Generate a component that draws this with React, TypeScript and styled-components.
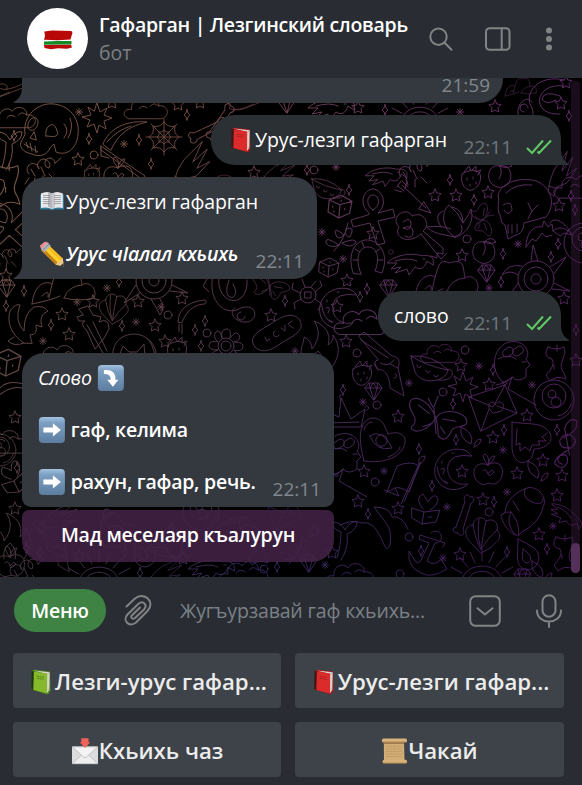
import React from "react";
import styled, { createGlobalStyle, css } from "styled-components";

const GlobalStyle = createGlobalStyle`
  * { box-sizing: border-box; }
  body { margin: 0; background: #292d33; font-family: "Open Sans", "Noto Sans", sans-serif; }
`;

/* ---------- wallpaper ---------- */

const star = "M0-6 L1.8-2 6-1.4 3 1.6 3.7 6 0 4 -3.7 6 -3 1.6 -6-1.4 -1.8-2Z";
const spark = "M0-5.500Q.5-1 3 0Q.5 1 0 5.500Q-.5 1-3 0Q-.5-1 0-5.500Z";
const aster = "M0-3.500V3.500M-3.500 0H3.500M-2.500-2.500 2.500 2.500M2.500-2.500-2.500 2.500";
const ring = "M4 0A4 4 0 1 1-4 0A4 4 0 1 1 4 0Z";

const shapes: Record<string, string> = {
  star,
  spark,
  aster,
  ring,
  skull:
    "M-25 4C-28-14-12-28 4-26C22-24 32-8 27 10C24 20 16 26 6 22L4 14 0 18C-2 24-10 28-18 24C-28 22-32 16-28 10ZM-22-6C-20-14-12-14-12-8S-18 4-22-2ZM-4 6C-6-2 2-10 6-2L8 4C6 8 0 6-4 6ZM-16 2-20 8-14 10ZM-26 14-12 22M-24 12-22 18M-20 13-18 21M-15 16-14 23M14-6Q20 0 14 8M20-12Q24-2 18 8",
  skull2:
    "M-22 8C-26 2-22-4-24-12C-20-26 0-30 14-26C30-20 34-2 24 10L2 16C2 22-2 28-6 28L-14 32-17 18-20 16ZM-19-2Q-10-8-10 3Q-14 10-18 3M-14 18V26M-10 18V26M-5 17V25M6-4 10 4 6 12M10 4 16-2M-16-14Q-6-24 10-22",
  web:
    "M0-18V18M-18 0H18M-13-13 13 13M13-13-13 13M0-15Q4-9 11-11Q9-4 15 0Q9 4 11 11Q4 9 0 15Q-4 9-11 11Q-9 4-15 0Q-9-4-11-11Q-4-9 0-15M0-7Q2-4 5-5Q4-2 7 0Q4 2 5 5Q2 4 0 7Q-2 4-5 5Q-4 2-7 0Q-4-2-5-5Q-2-4 0-7",
  burst: "M0-15 3-6 10-10 7-3 15 0 7 3 9 11 2 7 0 15-3 6-10 9-7 2-15-1-6-3-9-11-3-7Z",
  scythe:
    "M-22-2 22 28 20 32-22 2ZM-20-4C-14-20 4-28 24-26C8-22-4-16-12 2ZM-16-6Q-6-18 8-22M-22 0V8L-14 10",
  bone:
    "M-3 13 6-12C3-18 9-22 11-17C16-18 16-12 12-11L4 15C7 20 1 24-1 19C-6 20-8 14-3 13Z",
  bug: "M-16 2A6 6 0 1 1-6-3A6 6 0 1 1 4-4A5 5 0 1 1 10-9M-16 6-20 12M-10 6-12 14M-2 4-2 12M4 2 10 8M10-9 16-14M-14-3-10 4M-4-5 0 4",
  hand: "M-24 12-14 0-4-8 22-20 4-2 24-10 6 6 22 4 2 14-12 12-20 20ZM-20 6-12 14",
  ankh:
    "M-4-2C-16-12-8-26 0-26S16-12 5-2L20-6 22 2 5 6 12 28 4 30-3 8-20 12-22 5-5 0ZM0-5C-8-10-6-20 0-20S9-10 0-5Z",
  arrow: "M-14-14 10 9M8 3 15 14 3 10ZM-18-13-12-8M-14-18-8-12M-21-9-14-7M-10-20-8-14",
  strawberry:
    "M-9-4C-12 6-4 14 1 12C8 10 12 0 8-6Q0-10-9-4ZM-7-6 -2-12 0-7 5-12 5-6 10-8 7-3M-4 0V2M2-1V1M5 4V6M-1 6V8",
  apple:
    "M0-6C-14-12-18 4-10 11C-4 17 0 10 4 13C14 14 18-2 11-7Q5-10 0-6ZM0-6Q-8-16-3-17Q2-14 0-6Q2-16 7-15Q6-10 0-6M-5 0Q-2-4 0 3Q4-3 6 1Q2 6 0 4",
  key:
    "M4 4C-10 16-24 6-18-3C-28-14-10-24-5-14C8-20 14-4 6 1L26 18 26 24 20 23 20 28 14 26M4 4 24 29 30 23M-14-8Q-6-14-6-6T-14-2Q-4-6-4 2T-12 6",
  lotus:
    "M0 18C-14 10-14-8-6-14Q4-6 8 4Q14-4 16-10C20 4 10 16 0 18ZM0 18C-10 16-24 14-28 8Q-14 6-4 10M-14 8Q-22-4-12-8M6 6Q10 14 0 18M-3-12Q8-10 8 4",
  fly:
    "M0 0C-8-20-24-22-24-12C-24-4-16-2-20 6Q-26 10-18 12Q-8 12 0 0C6-10 26-6 28 2C30 10 14 6 14 12Q8 24 2 16Q2 8 0 0M-2-10 0 14M-3-10-7-18M-2-10 2-20M-6-4-16-12M6 1 18 3M-4 5-12 8M4 8 8 14",
  bat:
    "M-22 14C-22 0-14-8-6-6L-4-12 0-6 4-9 5-2C12-8 20-4 24 2C16-14 4-16 2-10M-22 14-16 6-12 8-6 0-2 4 4 2M24 2 16 0 12 3 5-2",
  peach: "M0-9C-12-12-14 4-8 9Q0 16 8 9C14 2 10-12 0-9ZM0-9Q3-2-1 4M0-9Q8-16 12-9Q6-6 0-9",
  horseshoe:
    "M-15 15C-22-8-10-19 0-18S22-6 14 15L7 13C13-2 8-11 0-11S-14-2-7 16ZM-13-9-8-6M12-9 7-6M-15 2-10 2M15 2 10 2M-6-16-4-11",
  bird:
    "M24-2C20-8 14-4 10-6C0-8-14-6-22 2L-12 2-18 8-8 6-14 12-2 8 0 14 6 6C12 10 16 6 18 0L24 4ZM-14 0Q0-4 8 0M14-2H16",
  sun:
    "M12 0A12 12 0 1 1-12 0A12 12 0 1 1 12 0M18 0A18 18 0 1 1-18 0A18 18 0 1 1 18 0M5 0A5 5 0 1 1-5 0A5 5 0 1 1 5 0M-5-18-3-34 2-18M14-12 30-22 18-5M18 4 34 12 16 10M6 18Q12 26 6 34Q2 26-3 18M-14 12-30 22-18 4M-18-4Q-26-10-34-4Q-28-16-14-13",
  raysun:
    "M20 4C18-16-18-16-20 4M14 4C12-9-12-9-14 4M0-16V-28M7-14 12-25M14-10 23-20M-7-14-12-25M-14-10-23-20M20-4 31-10M-20-4-31-10",
  gem: "M-8-3-4-8H5L9-3 1 9ZM-8-3H9M-4-8-3-3 1 9 4-3 5-8M-3-3 0-8 4-3",
  hat:
    "M-32 16C-30-4-18-8-12-4L-8-16Q-4-22 2-18Q14-22 16-15L18-3C26-8 34 2 30 10M-32 16Q-12 12-4 8M-12-4-15 10M18-3Q4-2 0 10M-22 8Q-14 0-16 9M0 10Q16 14 30 10",
  dice: "M-9-5 1-9 10-4 8 6-1 10-10 5ZM-9-5 0-1 10-4M0-1-1 10M-6 0V1M-5 4V5M4 2V3M1-5V-4",
  branch:
    "M-8 14Q2 4 6-14M4-8Q14-12 8 0Q2 0 4-8M2-2Q-10-12-6-2Q-4 4 2-2M0 6Q14 0 14 6Q8 12 0 6M-3 8Q-18-2-16 6Q-12 12-3 8",
  moon:
    "M10-19C-10-24-24-6-18 9C-12 22 4 24 14 15C0 17-8 8-6-4Q-3-16 18-13Q14-18 10-19M-12-8V-6M-13 0Q-7-3-11 5M-10 12 -6 14M-2-16H0M-17-2Q-16 10-7 15",
  cloud:
    "M-20 14C-28 10-24 2-16 4C-18-6-6-10-2-4C2-12 16-8 14 0C24-2 28 10 18 14ZM-8 3Q-4-2 1 2M5 0Q9-5 14 0",
  gun:
    "M-27-24-22-28 6-4C14-4 14 4 12 8L18 36 4 28C4 16-2 8-8 10Q-14 0-8 0ZM-25-20 2-2M-8 10-12 4M4 4 12 8M8 18A2 2 0 1 0 9 14M-6 3Q2 8 8 0",
  cup:
    "M-19-14Q2-16 18 0C16 12-8 16-15 2Q-18-8-19-14ZM-19-14Q-4-4 18 0M18-1C26 0 24 12 8 10M-13-5A2 2 0 1 0-9-4M-4 0A2 2 0 1 0 0 1M4 5A2 2 0 1 0 8 5",
  cupid:
    "M-24-12 12-24 24 4-12 22ZM-24-12 0-2 12-24M-12 22-4 0M24 4 4-3M0 4C-10-4 0-11 2-4C8-12 14-2 8 2Z",
  ball:
    "M20 0A20 20 0 1 1-20 0A20 20 0 1 1 20 0M12-4A12 12 0 1 1-12-4A12 12 0 1 1 12-4M-2-10A4 4 0 1 1-2-2A4 4 0 1 1-2-10M2-3A5 5 0 1 1 2 7A5 5 0 1 1 2-3M4 16Q14 14 17 4",
  heart:
    "M-20 21C-28-8-22-20-12-22C-2-22 0-16 4-6C16-10 24-4 20 6C16 18-2 24-20 21ZM-14-4Q-2-12 8 8Q-8 12-14-4ZM3 2A5 5 0 1 1-8-1A5 5 0 1 1 3 2M-20-10Q-18-18-12-18M4 17Q14 14 16 7",
  heart2:
    "M-18-21-18 6C-16 20-6 24 2 14L4 6C16 6 24-2 20-10C12-22-2-18-18-21ZM-13-14-14 2-10 0-10 8-5 4 0 8 2 2 10 2 8-2 16-2 12-6 17-10",
  head:
    "M-12 16C-22 4-18-14-6-20C10-26 20-12 14-4L18 2 14 6 14 14Q6 20 0 14L-4 26 24 42M-12 16Q-8 24 0 14M-14-4Q-4-10 4-4M-6-14A4 4 0 1 1-2-8A4 4 0 1 1-6-14M4-15A4 4 0 1 1 8-9A4 4 0 1 1 4-15M10-1H14M-16 22Q-6 20 0 14M-9 19A2 2 0 1 0-5 20",
  clef:
    "M-4 16Q-10 14-6 9Q2 6 0 15Q-4 22-10 16C-12 8 8 4 7-4Q0-14-6-4Q-6 4 2 2M2 8-2-14Q2-24 8-20Q10-12-3-6",
  leaf: "M-8-12Q6-6 2 5Q-10 0-8-12ZM5 8Q6 0 12 0Q12 6 5 8",
  flag:
    "M-18 12-8-14Q6-20 14-14L4 12Q-6 6-10 8ZM-10 8-6 16-21 10M14-16-4 24M16-18-1 22M14-16Q12-24 20-24Q20-18 14-16",
  book: "M-14 2-2 6 14 4 10 16-4 18-14 12ZM-2 6-4 18M-3 3Q-12-8-3-12Q0-8 2-4Q8-14 12-8Q12 0 4 4M2 11H6",
  shell:
    "M-12 10C-22 0-16-8-10-8C-8-18 2-16 3-12C12-16 16-8 14-3C22 6 10 10 9 14L-2 20ZM-10-8Q-8 6-2 16M3-12Q0 2-2 16M14-3Q4 6-2 16M-4-14Q-6 2-3 12",
  glove:
    "M-18 0C-18-14-4-22 2-24C12-30 26-16 20-6C18 6 6 16 0 18L-4 22C-12 24-22 8-22 2Q-18-2-12-1Q-4 8-4 22M-12-1Q-18 10-8 22M2-24Q-2-14 12-10Q20-8 20-14M-10-12-4-2",
  anchor:
    "M4-20A6 6 0 1 1 8-10L0 8Q8 14 14 6L20 16Q4 26-6 20Q-20 14-18-2L-12 8Q-8 12-6 7L2-10-8-14-7-18 18-10 16-6",
  whale:
    "M-42-16Q-30-22-20-18C0-22 2 20 8 4Q10-12 4-18-2-26-8-34 8-34 10-24 20-26 26-12 14-14C26 16 12 30-10 26C-28 22-30 0-26-10M-24 4Q-16 18 0 24",
  pear: "M-10-15Q0-10 6-6C14 0 12 14 0 16C-14 14-10 2-10-15ZM-5-5Q8 4 0 9Q-8 10-5-5",
  crown: "M-22-2-8 4-6-15 4 6 18-4 14 14-20 14ZM-6-18A2 2 0 1 0-5-14M18-6A2 2 0 1 1 20-3M-18 10 12 9",
  core: "M-8-16Q0-12 8-16C12-6 0 0 8 10L10 16Q0 12-6 18L-10 12Q0 2-4-4Q-14-6-8-16ZM1-12V-18M-2 2V6",
  phoenix:
    "M-4 18C-14 12-22 0-18-14Q-12-22-8-20Q-14-4-4 6Q-4-12 6-18Q16-20 20-14Q10-10 14 2L8 0Q10 10 2 10L4 18ZM-4 18Q-14 22-20 16L-14 12",
  dagger:
    "M-12-16-3-19 2-10 10-8 8-3Q18-8 18 4Q14 14 4 24L-4 6Q-12-2-6-4L-12-4-14-8-8-10ZM-4 0 12 28M2-3 16 26",
  cat: "M-22 14C-26-16 20-20 22 14M-16 12-12 2-6 8H2L9 0 10 12M-22 14Q-10 6-8 14M-5 12H0M12-6Q18 0 20 12",
  snake:
    "M-20-24C-26 0-8 18 8 8C26 2 26 24 10 22C0 20-4 12 2 8M-14-24C-18 6 16 10 14-20M8 12A4 4 0 1 0 12 16M-4-20Q-10-4-1-2Q6-6 0-16M-24-24-30-14-24-8",
  flower:
    "M5 0A5 5 0 1 1-5 0A5 5 0 1 1 5 0M8 0A8 8 0 1 1-8 0A8 8 0 1 1 8 0M-4-8Q-6-16 0-17T4-8Q10-16 13-11T8-4Q18-4 17 1T8 4Q14 10 10 14T3 8Q4 18-2 17T-4 8Q-10 16-13 11T-8 4Q-18 4-17-1T-8-4Q-14-10-10-14T-4-8",
  pill: "M-22 14C-30 4-18-2-8-8C4-16 14-22 22-14C30-2 14 4 6 9C-4 16-14 22-22 14ZM-12 4-10 8-7 6M-2-2A3 3 0 1 0 2 2M4-5 8-2 8-8M12-8 16-5M11-9 15-12",
  flame:
    "M-12 24C-22 10-14 2-14-6Q-6-2-6 6C2-4 2-14-4-22C12-16 12-4 10 2Q16-2 15-8C24 4 20 16 14 24M-6 24Q-8 14 0 8Q8 16 5 24",
  spider: "M8 0A8 8 0 1 1-8 0A8 8 0 1 1 8 0M-3-3H3V3H-3ZM-8-2-16-6-15-12M-7 4-14 8-13 14M7-3 14-9 12-14M7 4 14 9 10 15M-3-8-6-16M3-8 8-14",
  chili: "M-12 12C-12-2 0-8 14-10Q18-10 15-6C4-6-4 2-8 12ZM-11 14V22M-8 14-8 24",
  loop: "M-32 12C-36-6-24-18-8-20M30-12C20-4 4 2-6 2Q-18 0-10-6Q2-6-2 2M-32 12C-18 20 0 6 22 0Q32-2 32-12M-26 14Q-12 14 2 6",
  tail: "M-8 18Q-4 4-4-8Q-14-12-12-18Q-4-18 0-10Q6-20 12-18Q12-10 2-6Q4 8-4 20",
};

type Mark = [string, number, number, number?, number?];

const marks: Mark[] = [
  ["loop", 8, 88, 0.7], ["skull", 50, 130], ["burst", 97, 118], ["aster", 79, 112], ["spark", 14, 136], ["spark", 89, 139],
  ["spark", 139, 140], ["spark", 187, 115], ["spark", 151, 164], ["star", 78, 159], ["ring", 94, 155], ["aster", 124, 144],
  ["web", 164, 137], ["scythe", 123, 148], ["bone", 205, 126, 1, 45], ["bug", 45, 172], ["tail", 10, 150], ["cloud", 14, 115, 0.9],
  ["apple", 118, 174], ["hand", 190, 165, 0.9, -20], ["cloud", 146, 106, 0.9], ["star", 112, 102], ["star", 178, 104],
  ["strawberry", 92, 174, 0.8], ["star", 200, 102], ["bone", 216, 120, 1, 15], ["loop", 252, 100, 0.7], ["gem", 286, 104],
  ["bird", 330, 106, 1], ["raysun", 420, 117, 0.9], ["aster", 460, 112], ["star", 358, 107], ["spark", 385, 110],
  ["snake", 540, 100, 1, 90], ["star", 561, 103], ["star", 495, 106], ["spark", 569, 116], ["star", 566, 82], ["hat", 521, 88, 0.5],
  ["cat", 225, 181, 0.6], ["star", 254, 172], ["ring", 314, 170], ["bird", 385, 174, 0.9], ["bug", 417, 175], ["aster", 336, 167],
  ["hand", 278, 172, 0.7], ["spark", 307, 170], ["spark", 349, 190], ["dice", 340, 206, 1.2], ["cup", 327, 190, 0.8],
  ["ankh", 373, 215], ["arrow", 416, 199], ["star", 435, 195], ["star", 456, 195], ["star", 488, 192], ["spark", 450, 180],
  ["spark", 474, 200], ["strawberry", 471, 178], ["peach", 500, 175], ["skull2", 522, 207], ["key", 417, 230], ["lotus", 455, 219],
  ["fly", 483, 220, 0.6, 60], ["bat", 548, 233], ["peach", 484, 251], ["ring", 467, 239], ["ring", 391, 252, 0.6], ["star", 462, 255],
  ["star", 373, 233], ["horseshoe", 368, 258], ["bird", 409, 261], ["sun", 536, 279], ["gem", 486, 273], ["gem", 388, 288],
  ["hat", 447, 281], ["aster", 518, 244], ["aster", 343, 259], ["aster", 489, 288], ["aster", 322, 232], ["spark", 503, 254], ["spark", 558, 244],
  ["spark", 551, 257], ["spark", 501, 282], ["star", 559, 205], ["hand", 560, 174, 0.8, -30], ["dice", 329, 267], ["branch", 342, 237],
  ["ball", 584, 243], ["spark", 575, 210], ["spark", 571, 196], ["cloud", 578, 184],
  ["gem", 6, 288], ["spark", 24, 291], ["spark", 6, 306], ["hat", 64, 288, 1], ["aster", 107, 288], ["spark", 119, 282],
  ["star", 93, 301], ["aster", 77, 302], ["star", 62, 314], ["phoenix", 28, 325], ["spark", 51, 325], ["star", 69, 334],
  ["aster", 43, 341], ["cloud", 59, 354], ["dagger", 91, 325], ["shell", 114, 307, 0.85], ["star", 138, 301], ["sun", 154, 281],
  ["spark", 122, 326], ["aster", 136, 322], ["aster", 161, 307], ["star", 182, 298], ["star", 155, 325], ["ring", 168, 315],
  ["cat", 135, 344], ["star", 165, 341], ["strawberry", 177, 349], ["chili", 190, 310], ["spark", 195, 330], ["spark", 205, 321],
  ["spark", 201, 346], ["ring", 207, 333], ["snake", 233, 300], ["flower", 226, 346], ["fly", 270, 286, 0.7], ["spark", 285, 301],
  ["star", 271, 315], ["spider", 308, 295], ["pill", 277, 333], ["flame", 318, 343], ["aster", 295, 351], ["star", 347, 280],
  ["star", 337, 306], ["moon", 339, 308], ["cloud", 361, 319, 1.1], ["spark", 360, 297], ["spark", 367, 289], ["star", 346, 341],
  ["ring", 357, 353], ["gun", 386, 360], ["strawberry", 362, 373], ["cup", 430, 370], ["cloud", 440, 351, 0.8], ["star", 461, 365],
  ["aster", 479, 366], ["ring", 465, 350], ["burst", 463, 387], ["ring", 443, 392], ["star", 489, 384], ["spark", 493, 370],
  ["head", 512, 363], ["core", 556, 363], ["aster", 532, 385], ["aster", 409, 383], ["fly", 436, 418, 1.1], ["cupid", 493, 409],
  ["ball", 554, 400], ["star", 527, 415], ["gem", 373, 391], ["spark", 343, 390], ["spark", 453, 404], ["crown", 347, 413],
  ["star", 398, 416], ["aster", 363, 402], ["ring", 377, 405], ["spark", 576, 330], ["star", 576, 360], ["star", 564, 298],
  ["heart", 384, 440], ["star", 493, 437], ["spark", 504, 430], ["spark", 456, 440], ["spark", 419, 449], ["leaf", 469, 439],
  ["heart2", 530, 443], ["spark", 557, 430], ["clef", 567, 445, 1.2], ["moon", 454, 469], ["star", 462, 471], ["apple", 488, 471],
  ["star", 517, 473], ["star", 543, 460], ["star", 562, 475], ["leaf", 536, 473], ["flag", 405, 480], ["aster", 384, 471],
  ["aster", 503, 450], ["ring", 375, 482], ["star", 364, 471], ["spark", 432, 486], ["spark", 494, 502], ["spark", 507, 552],
  ["star", 358, 501], ["star", 398, 508], ["star", 483, 499], ["star", 557, 495], ["head", 343, 455, 1], ["whale", 382, 541],
  ["spark", 368, 514], ["book", 426, 506], ["bone", 459, 514], ["ring", 489, 512], ["shell", 483, 533], ["glove", 523, 513],
  ["aster", 447, 507], ["aster", 507, 492], ["aster", 553, 526], ["anchor", 427, 553], ["spark", 421, 551], ["raysun", 482, 577],
  ["pear", 528, 554], ["star", 539, 534], ["star", 460, 554], ["spark", 547, 549], ["ring", 409, 537], ["aster", 443, 558],
  ["core", 564, 553], ["cloud", 350, 572], ["tail", 345, 540], ["ring", 400, 574], ["gem", 522, 577], ["leaf", 540, 573],
  ["bird", 566, 514, 0.8, 40], ["core", 8, 185, 1.2], ["ankh", 8, 227, 1, -30], ["bug", 8, 260, 0.8], ["star", 6, 275],
  ["dice", 7, 362, 1.4], ["chili", 13, 388, 1, 30], ["star", 15, 417], ["cloud", 4, 439], ["ball", 0, 450, 0.8],
  ["spark", 17, 468], ["book", 12, 475, 1, -35], ["star", 15, 508], ["flame", 10, 535], ["apple", 10, 563], ["spark", 26, 548],
  ["hand", 58, 517, 0.8], ["gun", 55, 543, 0.8], ["ring", 107, 513], ["heart", 120, 530, 0.8], ["spark", 40, 553], ["star", 79, 555],
  ["spark", 125, 552], ["pear", 145, 551], ["star", 183, 558], ["ball", 201, 512, 0.9], ["bat", 235, 530], ["spark", 172, 528],
  ["branch", 297, 550], ["aster", 277, 540], ["core", 258, 547], ["ring", 264, 569], ["raysun", 99, 578], ["bird", 210, 567],
  ["cloud", 244, 570], ["spark", 277, 567], ["gem", 308, 563], ["aster", 325, 565], ["star", 314, 531], ["hand", 165, 572, 0.7],
  ["bug", 28, 573], ["spark", 140, 573], ["lotus", 175, 540], ["cupid", 285, 515, 0.7], ["star", 332, 552],
];

const WallpaperSvg = styled.svg`
  position: absolute;
  inset: 0;
  width: 100%;
  height: 100%;
  z-index: -1;
`;

const Wallpaper = () => (
  <WallpaperSvg viewBox="0 78 582 499" preserveAspectRatio="none" aria-hidden>
    <defs>
      <linearGradient id="warm" x1="0" x2="1">
        <stop offset="0" stopColor="#7d5a48" />
        <stop offset=".3" stopColor="#70483f" />
        <stop offset=".6" stopColor="#683a58" />
        <stop offset="1" stopColor="#5e2b68" />
      </linearGradient>
      <linearGradient id="cool" x1="0" x2="1">
        <stop offset="0" stopColor="#463640" />
        <stop offset=".45" stopColor="#30265c" />
        <stop offset="1" stopColor="#481a58" />
      </linearGradient>
      <linearGradient id="fadeDown" x2="0" y2="1">
        <stop offset=".1" stopColor="#000" />
        <stop offset="1" stopColor="#fff" />
      </linearGradient>
      <mask id="lower" maskUnits="userSpaceOnUse" x="0" y="78" width="582" height="499">
        <rect y="78" width="582" height="499" fill="url(#fadeDown)" />
      </mask>
      <mask id="lines" maskUnits="userSpaceOnUse" x="0" y="78" width="582" height="499">
        <g fill="none" stroke="#fff" strokeWidth=".95" strokeLinejoin="round" strokeLinecap="round">
          {marks.map(([kind, x, y, scale = 1, turn = 0], i) => (
            <path key={i} d={shapes[kind]} transform={`translate(${x} ${y}) rotate(${turn}) scale(${scale})`} />
          ))}
        </g>
      </mask>
    </defs>
    <g mask="url(#lines)">
      <rect y="78" width="582" height="499" fill="url(#warm)" />
      <rect y="78" width="582" height="499" fill="url(#cool)" mask="url(#lower)" />
    </g>
  </WallpaperSvg>
);

/* ---------- emoji ---------- */

const EmojiSvg = styled.svg<{ $w: number }>`
  display: block;
  flex: none;
  width: ${(p) => p.$w}px;
  height: 26px;
  overflow: visible;
`;

const ClosedBook = ({ tone }: { tone: "red" | "green" }) => {
  const red = tone === "red";
  return (
    <EmojiSvg $w={28} viewBox="0 0 28 26" aria-label={red ? "📕" : "📗"}>
      <path d="M5 1.500 8 .8 23 2.500 23.500 22 21 25.500 4.500 20.500Z" fill={red ? "#a91a1e" : "#4c8a1c"} />
      <path d="M7 1.400 22.700 3.200 22.300 21 20 24V5Z" fill="#d9d5d0" />
      <path d="M20.500 5 22.800 3.200M20.800 21 22.500 19" stroke="#9a9590" strokeWidth=".6" />
      <path d="M6.500 2.500 20.200 4.600 20 24.600 6 20.700Z" fill={red ? "#dc2b2b" : "#85b92b"} />
      <path d="M4.600 1.700 6.800 2.400 6.300 20.900 4.200 20Z" fill={red ? "#3b1718" : "#203716"} />
      <path d="M9.500 7.200 17 8.300M10 9.300 16.500 10.200" stroke={red ? "#a91f22" : "#537e20"} strokeWidth="1" strokeDasharray="2 .7" />
    </EmojiSvg>
  );
};

const OpenBook = () => (
  <EmojiSvg $w={27} viewBox="0 0 27 26" aria-label="📖">
    <path d="M1 5.500H25V20.500H15L13 21.500 11 20.500H1Z" fill="#317997" />
    <path d="M2 19V4.500Q8 1.500 13 4.500Q18 1.500 23.800 4.500V19Q18 17.500 13 20Q8 17.500 2 19Z" fill="#e9e9ec" />
    <path d="M13 4.500V20Q11 17.800 9 18V3.200Z" fill="#b7b7bf" />
    <path d="M13 4.500V20L16 18.300V3.500Z" fill="#c8c8ce" />
    <path d="M4 6.500 11 6.500M4 8.500H11M4 10.500H11M4 12.500H11M4 14.500H11M15 6.500H22M15 8.500H22M15 10.500H22M15 12.500H22M15 14.500H22" stroke="#88888f" strokeWidth=".7" />
  </EmojiSvg>
);

const Pencil = () => (
  <EmojiSvg $w={27} viewBox="0 0 27 26" aria-label="✏️">
    <path d="M8.500 2.800 23.800 17.500 24.500 25 17 23.700 2.200 9.300Z" fill="#f6bc20" />
    <path d="M4.500 7 19.200 21.800 17 23.700 2.200 9.300Z" fill="#c98217" />
    <path d="M6.500 5 21.800 20 19.500 22.200 4.400 7.300Z" fill="#ffd12e" />
    <path d="M23.800 17.500 25 25.500 17 23.700 18 21.500 20.500 21.500 21.500 19Z" fill="#e9c690" />
    <path d="M25 25.500 21.500 24.700 24.400 22Z" fill="#333" />
    <path d="M5.800.8Q8 .2 10 2.300L3.600 8.700Q.8 6.700 1 4.500Z" fill="#ee8d94" />
    <path d="M8.600 1.800 11.800 4.800 5.300 11.200 2 8Z" fill="#adb4bb" />
    <path d="M10 3 3.800 9.500" stroke="#737c83" strokeWidth=".8" />
  </EmojiSvg>
);

const ArrowTile = ({ down }: { down?: boolean }) => (
  <EmojiSvg $w={28} viewBox="0 0 28 26" aria-label={down ? "⤵️" : "➡️"}>
    <defs>
      <linearGradient id="tile" x2="0" y2="1">
        <stop offset="0" stopColor="#a2c2e0" />
        <stop offset=".22" stopColor="#7d9fc2" />
        <stop offset="1" stopColor="#5c7da0" />
      </linearGradient>
    </defs>
    <g transform="translate(.9 0)">
      <rect width="26" height="26" rx="4" fill="url(#tile)" />
      {down ? (
        <path d="M6 5.300C13.500 4.200 18 7.500 17.500 14.800H20.500L15 21.800 9.300 14.800H12.700Q13.300 8.800 6 8.800Z" fill="#fff" />
      ) : (
        <path d="M4.500 10.400H14V6.200L22 13 14 19.600V15.500H4.500Z" fill="#fff" />
      )}
    </g>
  </EmojiSvg>
);

const Inbox = () => (
  <EmojiSvg $w={28} viewBox="0 0 28 26" aria-label="📩">
    <rect x="1" y="8.500" width="26" height="17.500" rx=".8" fill="#dcdcde" />
    <path d="M1.200 25.800 11 16.500H17L26.800 25.800Z" fill="#eeeeef" stroke="#b5b5b8" strokeWidth=".7" />
    <path d="M1.200 8.800H26.800L15.500 19Q14 20.200 12.500 19Z" fill="#f3f3f4" stroke="#b0b0b4" strokeWidth=".7" />
    <path d="M10.300.2H17.500V4.200H19.300L14 10 8.600 4.200H10.300Z" fill="#f0635a" />
  </EmojiSvg>
);

const Scroll = () => (
  <EmojiSvg $w={27} viewBox="0 0 27 26" aria-label="📜">
    <path d="M2.800 2H23L23.500 23H3Z" fill="#d3ad76" />
    <path d="M2.800 4.500H23V6H2.800Z" fill="#a27c4b" />
    <rect x="1" y=".6" width="25" height="4" rx="1.500" fill="#d9b47e" />
    <path d="M2 4.200H25" stroke="#8a6438" strokeWidth=".8" />
    <rect x="1.600" y="21.800" width="24.400" height="3.600" rx="1.500" fill="#d8b27b" />
    <path d="M2 25.200H25" stroke="#8a6438" strokeWidth=".7" />
    <path d="M5 8.500H21M5 11H21M5 13.500H21M5 16H21M5 18.500H21" stroke="#b8935e" strokeWidth=".7" strokeDasharray="3 .6" />
  </EmojiSvg>
);

/* ---------- layout ---------- */

const Window = styled.main`
  width: 582px;
  height: 785px;
  display: flex;
  flex-direction: column;
  background: #292d33;
  color: #fff;
  overflow: hidden;
`;

const Header = styled.header`
  height: 78px;
  flex: none;
  display: flex;
  align-items: center;
  padding: 0 25px 0 27px;
`;

const Avatar = styled.svg`
  width: 61px;
  height: 61px;
  margin: 0 11px 2px 0;
  flex: none;
`;

const Peer = styled.div`
  flex: 1;
  min-width: 0;
  white-space: nowrap;
`;

const Title = styled.h1`
  margin: 0;
  font-size: 19.5px;
  line-height: 28px;
  font-weight: 600;
  letter-spacing: -0.27px;
`;

const Status = styled.div`
  font-size: 19.5px;
  line-height: 28px;
  color: #7c8084;
`;

const HeaderIcons = styled.div`
  display: flex;
  align-items: center;
  gap: 31px;
  flex: none;
`;

const Icon = styled.svg<{ $w: number; $h: number }>`
  width: ${(p) => p.$w}px;
  height: ${(p) => p.$h}px;
  flex: none;
  fill: none;
  stroke: #828384;
  stroke-width: 2;
  stroke-linecap: round;
  stroke-linejoin: round;
  overflow: visible;
`;

const Chat = styled.section`
  position: relative;
  z-index: 0;
  height: 499px;
  flex: none;
  background: #000;
  overflow: hidden;
  display: flex;
`;

const Messages = styled.div`
  flex: 1;
  display: flex;
  flex-direction: column;
  gap: 12px;
  padding: 0 10px 0 22px;
  margin-top: -25px;
`;

const ScrollTrack = styled.div`
  width: 9px;
  margin: 3px 2px 4px 0;
  flex: none;
  display: flex;
  align-items: flex-end;
  background: rgba(63, 32, 64, 0.42);
  border-radius: 4px;
`;

const ScrollThumb = styled.div`
  width: 9px;
  height: 30px;
  border-radius: 5px;
  background: #54305a;
`;

const Bubble = styled.article<{ $out?: boolean; $w: number; $attached?: boolean }>`
  position: relative;
  display: flex;
  align-items: flex-end;
  align-self: ${(p) => (p.$out ? "flex-end" : "flex-start")};
  width: ${(p) => p.$w}px;
  padding: 12px ${(p) => (p.$out ? 9 : 13)}px 12px 16px;
  background: ${(p) => (p.$out ? "#2b3034" : "#343940")};
  border-radius: ${(p) => (p.$attached ? "22px 22px 9px 9px" : p.$out ? "24px 24px 0 24px" : "24px 24px 24px 0")};
`;

const TailSvg = styled.svg<{ $out?: boolean }>`
  position: absolute;
  bottom: 0;
  width: 10px;
  height: 14px;
  ${(p) =>
    p.$out
      ? css`
          right: -9px;
          fill: #2b3034;
        `
      : css`
          left: -9px;
          transform: scaleX(-1);
          fill: #343940;
        `}
`;

const Tail = ({ out }: { out?: boolean }) => (
  <TailSvg $out={out} viewBox="0 0 10 14">
    <path d="M0 0H1Q1.500 9 9.500 13.300 9.500 14 8 14H0Z" />
  </TailSvg>
);

const Lines = styled.div`
  flex: 1;
  min-width: 0;
  display: grid;
  grid-auto-rows: 26px;
`;

const Line = styled.p<{ $bold?: boolean; $italic?: boolean; $indent?: boolean }>`
  margin: 0;
  padding-left: ${(p) => (p.$indent ? 1 : 0)}px;
  display: flex;
  align-items: center;
  font-size: 19.5px;
  letter-spacing: ${(p) => (p.$bold ? -0.24 : -0.12)}px;
  line-height: 26px;
  white-space: pre;
  font-weight: ${(p) => (p.$bold ? 600 : 400)};
  font-style: ${(p) => (p.$italic ? "italic" : "normal")};
`;

const Meta = styled.div<{ $out?: boolean }>`
  display: flex;
  flex: none;
  align-items: center;
  gap: 14px;
  margin-bottom: -7px;
  font-size: 19px;
  line-height: 26px;
  color: ${(p) => (p.$out ? "#71777b" : "#81878d")};
`;

const TickSvg = styled.svg`
  width: 26px;
  height: 16px;
  fill: none;
  stroke: #5fca63;
  stroke-width: 2;
`;

const Ticks = () => (
  <TickSvg viewBox="0 0 26 16">
    <path d="M1 9 6 14 17 1.500M11.500 12.500 13 14 25 1.500" />
  </TickSvg>
);

const Reply = styled.div`
  display: flex;
  flex-direction: column;
  gap: 3px;
`;

const InlineButton = styled.button`
  width: 312px;
  height: 52px;
  padding: 0 0 2px;
  border: 0;
  border-radius: 7px 7px 22px 22px;
  background: rgba(69, 35, 71, 0.86);
  color: #fff;
  font: 600 19.5px/26px "Open Sans", "Noto Sans", sans-serif;
  letter-spacing: -0.23px;
`;

const Composer = styled.div`
  height: 68px;
  flex: none;
  display: flex;
  align-items: center;
  padding: 0 19px 1px 14px;
`;

const MenuButton = styled.button`
  width: 92px;
  height: 43px;
  border: 0;
  padding: 0;
  border-radius: 22px;
  background: #3e8344;
  color: #fff;
  font: 600 19.5px/26px "Open Sans", "Noto Sans", sans-serif;
  letter-spacing: -0.25px;
  margin-right: 18px;
`;

const Placeholder = styled.div`
  flex: 1;
  padding-left: 27px;
  font-size: 19.5px;
  letter-spacing: -0.16px;
  color: #7b8187;
  white-space: nowrap;
`;

const ComposerIcons = styled.div`
  display: flex;
  align-items: center;
  gap: 34px;
`;

const Keyboard = styled.div`
  display: grid;
  grid-template-columns: 268px 269px;
  grid-auto-rows: 55px;
  gap: 14px;
  padding: 8px 0 0 13px;
`;

const Key = styled.button`
  display: flex;
  align-items: center;
  justify-content: center;
  border: 0;
  padding: 2px 0 0;
  border-radius: 4px;
  background: #3d4349;
  color: #ececec;
  font: 600 22.2px/28px "Open Sans", "Noto Sans", sans-serif;
  white-space: nowrap;
`;

export default function App() {
  return (
    <>
      <GlobalStyle />
      <Window>
        <Header>
          <Avatar viewBox="0 0 61 61">
            <circle cx="30.500" cy="30.500" r="30.500" fill="#fff" />
            <path d="M17.300 23.500 25 22.600 44.500 23 45.500 25 44.500 28 43.500 31.500 31 32.300 17 31.800 18 28Z" fill="#b90808" />
            <path d="M17 33.500 30 33 44.500 33V36.500L17 36.800Z" fill="#168a26" />
            <path d="M17 37 44 36.800 45 39.500 40 40.800 31 40.300 24 41.200 17.500 40Z" fill="#b90808" />
          </Avatar>
          <Peer>
            <Title>Гафарган | Лезгинский словарь</Title>
            <Status>бот</Status>
          </Peer>
          <HeaderIcons>
            <Icon $w={25} $h={25} viewBox="0 0 25 25">
              <circle cx="10.500" cy="9.700" r="8.200" />
              <path d="M16.600 15.800 23.500 22.800" />
            </Icon>
            <Icon $w={26} $h={24} viewBox="0 0 26 24">
              <rect x="2" y="1.300" width="23.500" height="21.500" rx="3.500" />
              <path d="M17.700 1.500V22.500" />
            </Icon>
            <Icon $w={16} $h={26} viewBox="0 0 16 26">
              <g fill="#828384" stroke="none">
                <circle cx="8" cy="4.500" r="3" />
                <circle cx="8" cy="13" r="3" />
                <circle cx="8" cy="21.500" r="3" />
              </g>
            </Icon>
          </HeaderIcons>
        </Header>

        <Chat>
          <Wallpaper />
          <Messages>
            <Bubble $w={481}>
              <Lines>
                <Line />
              </Lines>
              <Meta>21:59</Meta>
              <Tail />
            </Bubble>
            <Bubble $out $w={350}>
              <Lines>
                <Line>
                  <ClosedBook tone="red" />
                  Урус-лезги гафарган
                </Line>
              </Lines>
              <Meta $out>
                22:11 <Ticks />
              </Meta>
              <Tail out />
            </Bubble>
            <Bubble $w={295}>
              <Lines>
                <Line $indent>
                  <OpenBook />
                  Урус-лезги гафарган
                </Line>
                <Line />
                <Line $bold $italic $indent>
                  <Pencil />
                  Урус чӀалал кхьихь
                </Line>
              </Lines>
              <Meta>22:11</Meta>
              <Tail />
            </Bubble>
            <Bubble $out $w={183}>
              <Lines>
                <Line>слово</Line>
              </Lines>
              <Meta $out>
                22:11 <Ticks />
              </Meta>
              <Tail out />
            </Bubble>
            <Reply>
              <Bubble $w={312} $attached>
                <Lines>
                  <Line $italic>
                    Слово <ArrowTile down />
                  </Line>
                  <Line />
                  <Line $bold>
                    <ArrowTile /> гаф, келима
                  </Line>
                  <Line />
                  <Line $bold>
                    <ArrowTile /> рахун, гафар, речь.
                  </Line>
                </Lines>
                <Meta>22:11</Meta>
              </Bubble>
              <InlineButton>Мад меселаяр къалурун</InlineButton>
            </Reply>
          </Messages>
          <ScrollTrack>
            <ScrollThumb />
          </ScrollTrack>
        </Chat>

        <Composer>
          <MenuButton>Меню</MenuButton>
          <Icon $w={29} $h={32} viewBox="0 0 29 32">
            <path d="M2.500 11.500 11 3.500C20-4 32 7 23.500 16L12 27.500C5 33-2 25.500 3.500 19.500L14.500 8.700C19 5 24 10 20 14.500L11 23C8 25 6 22 8.300 20L16 12.500" />
          </Icon>
          <Placeholder>Жугъурзавай гаф кхьихь...</Placeholder>
          <ComposerIcons>
            <Icon $w={32} $h={32} viewBox="0 0 32 32">
              <rect x="1.200" y="1.200" width="29.600" height="29.600" rx="5.500" />
              <path d="M8.500 13.300 16 19.500 23.500 13.300" />
            </Icon>
            <Icon $w={28} $h={34} viewBox="0 0 28 34">
              <rect x="7.500" y="1.200" width="13" height="21.500" rx="6.500" />
              <path d="M2 16.500C2 31 26 31 26 16.500M14 27.500V33" />
            </Icon>
          </ComposerIcons>
        </Composer>

        <Keyboard>
          <Key>
            <ClosedBook tone="green" />
            Лезги-урус гафар...
          </Key>
          <Key>
            <ClosedBook tone="red" />
            Урус-лезги гафар...
          </Key>
          <Key>
            <Inbox />
            Кхьихь чаз
          </Key>
          <Key>
            <Scroll />
            Чакай
          </Key>
        </Keyboard>
      </Window>
    </>
  );
}
